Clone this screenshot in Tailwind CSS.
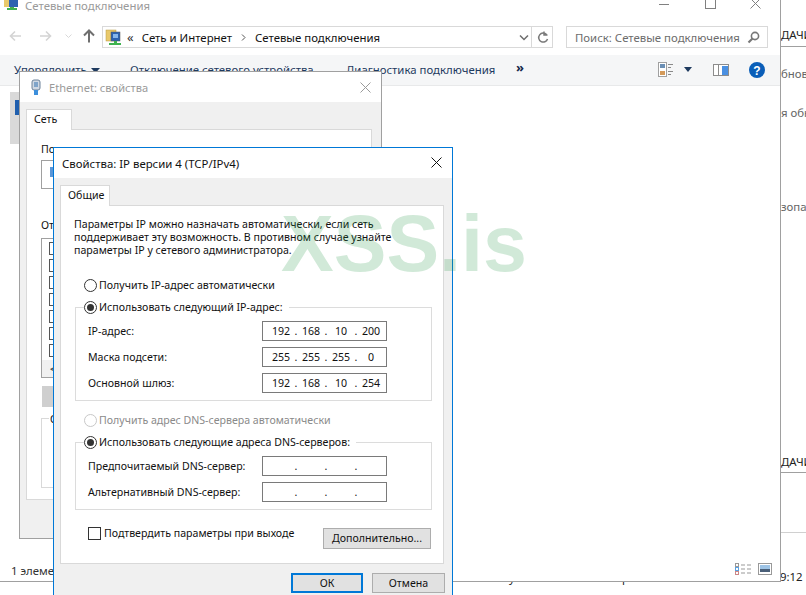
<!DOCTYPE html>
<html lang="ru">
<head>
  <meta charset="UTF-8">
  <title>Свойства: IP версии 4</title>
  <script src="https://cdn.jsdelivr.net/npm/@tailwindcss/browser@4"></script>
</head>
<body class="relative w-[806px] h-[595px] overflow-hidden bg-white font-['Noto_Sans',sans-serif] text-[11.4px] leading-[13px] text-[#1a1a1a]">

  <!-- desktop behind: other window edges -->
  <div class="absolute left-[781px] top-[28px] w-[25px] border-b border-[#a0a0a0] h-[19px] text-[#222] whitespace-nowrap overflow-hidden">ДАЧИ</div>
  <div class="absolute left-[781px] top-[67px] text-[#666] whitespace-nowrap">бнов.</div>
  <div class="absolute left-[781px] top-[106px] text-[#666] whitespace-nowrap">я обн</div>
  <div class="absolute left-[781px] top-[200px] text-[#666] whitespace-nowrap">зопас</div>
  <div class="absolute left-[781px] top-[455px] w-[25px] h-[18px] border-b border-[#a0a0a0] text-[#222] whitespace-nowrap overflow-hidden">ДАЧИ</div>
  <div class="absolute left-[781px] top-[532px] w-[25px] border-t border-[#d0d0d0]"></div>
  <div class="absolute left-[780px] top-[570px] text-[#222]">9:12</div>
  <span class="absolute left-[509px] top-[571px] text-[#222]">у</span>
  <span class="absolute left-[622px] top-[571px] text-[#222]">р</span>

  <!-- explorer window -->
  <div class="absolute left-0 top-0 w-[781px] h-[582px] bg-white border-r border-b border-[#a0a0a0] flex flex-col">
    <div class="h-[26px] flex items-start relative">
      <svg class="absolute left-[4px] top-[-4px]" width="16" height="16" viewBox="0 0 16 16"><rect x="0" y="1" width="9" height="10" fill="#e9c96b"/><rect x="5" y="2" width="9" height="9" fill="#2d63b0"/><rect x="6" y="11" width="4" height="1" fill="#4caf50"/><rect x="3" y="12" width="10" height="2" fill="#3fb34f"/></svg>
      <span class="ml-[25px] text-[#9a9a9a] -mt-px">Сетевые подключения</span>
      <div class="ml-auto relative w-[130px] h-[12px]">
        <div class="absolute left-[9px] top-[4px] w-[10px] h-px bg-[#808080]"></div>
        <div class="absolute left-[55px] top-[-3px] w-[11px] h-[12px] border border-[#808080]"></div>
        <svg class="absolute left-[100px] top-[-2px]" width="11" height="11" viewBox="0 0 11 11"><path d="M.5.5l10 10M10.5.5l-10 10" stroke="#808080" fill="none"/></svg>
      </div>
    </div>

    <div class="h-[21px] flex items-center relative">
      <svg class="absolute left-[9px] top-[4px]" width="13" height="12" viewBox="0 0 13 12"><path d="M12 6H1.5M6 1.5L1.5 6 6 10.5" stroke="#d4d4d4" stroke-width="1.6" fill="none"/></svg>
      <svg class="absolute left-[39px] top-[4px]" width="13" height="12" viewBox="0 0 13 12"><path d="M1 6h10.5M7 1.5L11.5 6 7 10.5" stroke="#d4d4d4" stroke-width="1.6" fill="none"/></svg>
      <svg class="absolute left-[65px] top-[8px]" width="7" height="5" viewBox="0 0 7 5"><path d="M.5.5l3 3 3-3" stroke="#d8d8d8" fill="none"/></svg>
      <svg class="absolute left-[83px] top-[3px]" width="12" height="14" viewBox="0 0 12 14"><path d="M6 13.5V2M1 6.5L6 1.5l5 5" stroke="#6f6f6f" stroke-width="2" fill="none"/></svg>

      <div class="absolute left-[102px] top-0 w-[451px] h-[22px] border border-[#d9d9d9] flex items-center">
        <svg class="ml-[2px] shrink-0" width="16" height="17" viewBox="0 0 16 17"><rect x="1" y="1" width="10" height="11" fill="#e9c96b" stroke="#b89a45" stroke-width=".5"/><rect x="6" y="3" width="9" height="9" fill="#2d63b0" stroke="#555" stroke-width=".5"/><rect x="8" y="5" width="5" height="4" fill="#86b6ea"/><rect x="9" y="12" width="3" height="2" fill="#3fb34f"/><rect x="4" y="14" width="12" height="2" fill="#3fb34f"/></svg>
        <span class="ml-[6px] text-[#333] text-[13px]">«</span>
        <span class="ml-[8px] text-[#111]">Сеть и Интернет</span>
        <svg class="ml-[9px] shrink-0" width="5" height="7" viewBox="0 0 5 7"><path d="M1 .5l3 3-3 3" stroke="#555" fill="none"/></svg>
        <span class="ml-[9px] text-[#111]">Сетевые подключения</span>
        <svg class="absolute left-[416px] top-[8px]" width="10" height="6" viewBox="0 0 10 6"><path d="M1 .5l4 4 4-4" stroke="#6f6f6f" stroke-width="1.5" fill="none"/></svg>
        <div class="absolute left-[428px] top-0 bottom-0 border-l border-[#d9d9d9] w-[22px] flex items-center justify-center">
          <svg width="12" height="13" viewBox="0 0 12 13"><path d="M9.5 3.5A4.5 4.5 0 1 0 10.5 8M7 .5v3.5h3.5" stroke="#7a7a7a" stroke-width="1.5" fill="none"/></svg>
        </div>
      </div>

      <div class="absolute left-[566px] top-0 w-[202px] h-[22px] border border-[#d9d9d9] flex items-center pl-[8px]">
        <span class="text-[#6d6d6d] whitespace-nowrap">Поиск: Сетевые подключения</span>
        <svg class="absolute right-[7px] top-[4px]" width="13" height="13" viewBox="0 0 13 13"><circle cx="8" cy="5" r="3.6" stroke="#777" stroke-width="1.6" fill="none"/><path d="M5.500 7.500L1.500 11.500" stroke="#777" stroke-width="2.2"/></svg>
      </div>
    </div>

    <div class="mt-[8px] h-[31px] bg-[#f5f6f7] border-b border-[#e8e9ea] relative flex items-center whitespace-nowrap text-[#1e3a5f]">
      <span class="absolute left-[14px] top-[8px]">Упорядочить</span>
      <svg class="absolute left-[91px] top-[13px]" width="9" height="5" viewBox="0 0 9 5"><path d="M0 0h9L4.500 5z" fill="#1e3a5f"/></svg>
      <span class="absolute left-[130px] top-[8px]">Отключение сетевого устройства</span>
      <span class="absolute left-[346px] top-[8px]">Диагностика подключения</span>
      <span class="absolute left-[516px] top-[6px] text-[13px] font-bold text-[#14284a]">»</span>
      <svg class="absolute left-[658px] top-[7px]" width="15" height="15" viewBox="0 0 15 15"><rect x=".5" y=".5" width="8" height="14" fill="#fff" stroke="#a0a0a0"/><rect x="2" y="2" width="5" height="4" fill="#6b8fb5"/><rect x="2" y="9" width="5" height="4" fill="#d49a5a"/><path d="M10 2.500h5M10 5.500h3M10 9.500h5M10 12.500h3" stroke="#8a8a8a"/></svg>
      <svg class="absolute left-[684px] top-[12px]" width="8" height="5" viewBox="0 0 8 5"><path d="M0 0h8L4 5z" fill="#1e3a5f"/></svg>
      <svg class="absolute left-[713px] top-[9px]" width="16" height="12" viewBox="0 0 16 12"><rect x=".5" y=".5" width="15" height="11" fill="#fff" stroke="#8c8c8c"/><path d="M5.500 1v10" stroke="#8c8c8c"/><rect x="9" y="2" width="6" height="9" fill="#4a90e2"/></svg>
      <svg class="absolute left-[749px] top-[7px]" width="16" height="16" viewBox="0 0 16 16"><circle cx="8" cy="8" r="8" fill="#0a5eb8"/><text x="8" y="12.500" text-anchor="middle" font-family="Liberation Sans" font-weight="700" font-size="12" fill="#fff">?</text></svg>
    </div>

    <div class="relative flex-1">
      <div class="absolute left-[10px] top-[6px] w-[10px] h-[52px] bg-[#d9d9d9]"></div>
      <div class="absolute left-[15px] top-[14px] w-[5px] h-[15px] bg-[#1f5fae]"></div>
      <span class="absolute left-[11px] top-[478px] text-[#333]">1 элемент</span>
      <svg class="absolute left-[735px] top-[477px]" width="16" height="13" viewBox="0 0 16 13"><rect x=".5" y=".5" width="3" height="3" fill="#fff" stroke="#999"/><rect x=".5" y="4.500" width="3" height="3" fill="#fff" stroke="#5aa0e0"/><rect x=".5" y="8.500" width="3" height="3" fill="#fff" stroke="#c88"/><path d="M6 2h4M12 2h4M6 6h4M12 6h4M6 10h4M12 10h4" stroke="#999"/></svg>
      <svg class="absolute left-[758px] top-[477px]" width="14" height="12" viewBox="0 0 14 12"><rect x=".5" y=".5" width="13" height="11" fill="#fff" stroke="#999"/><rect x="2" y="2" width="10" height="4" fill="#9ec4e6"/><rect x="2" y="6" width="10" height="3" fill="#4a5f78"/></svg>
    </div>
  </div>

  <!-- Ethernet properties window -->
  <div class="absolute left-[19px] top-[71px] w-[363px] h-[468px] border border-[#a0a0a0] bg-[#f0f0f0] flex flex-col">
    <div class="h-[30px] bg-white flex items-center relative shrink-0">
      <svg class="ml-[11px]" width="10" height="17" viewBox="0 0 10 17"><rect x="1" y="1" width="8" height="10" rx="2" fill="#cfd8e3" stroke="#6d8299"/><rect x="3" y="3" width="4" height="5" fill="#7fa4c9"/><rect x="3" y="11" width="4" height="5" fill="#3d8fdc"/></svg>
      <span class="ml-[8px] text-[#9a9a9a] text-[11.1px]">Ethernet: свойства</span>
      <svg class="absolute right-[10px] top-[10px]" width="11" height="11" viewBox="0 0 11 11"><path d="M.5.5l10 10M10.500.5l-10 10" stroke="#9a9a9a" fill="none"/></svg>
    </div>
    <div class="px-[6px] pt-[7px] text-[10.6px]">
      <div class="w-[46px] h-[21px] -mb-px relative z-10 bg-white border border-b-0 border-[#d9d9d9] pl-[7px] pt-[3px] text-[#111]">Сеть</div>
      <div class="w-[346px] h-[371px] bg-white border border-[#d9d9d9] relative text-[#111] overflow-hidden">
        <span class="absolute left-[14px] top-[13px]">Подключение через:</span>
        <div class="absolute left-[14px] top-[30px] w-[300px] h-[29px] border border-[#a0a0a0]">
          <div class="ml-[8px] mt-[6px] w-[8px] h-[10px] bg-[#5b97d8]"></div>
        </div>
        <span class="absolute left-[14px] top-[89px]">Отмеченные компоненты</span>
        <div class="absolute left-[14px] top-[108px] w-[300px] h-[140px] border border-[#a0a0a0] flex flex-col pl-[7px] pt-[3px] gap-[4px]">
          <div class="w-[13px] h-[13px] border border-[#555] text-[10px] leading-[11px] text-center">✓</div>
          <div class="w-[13px] h-[13px] border border-[#555] text-[10px] leading-[11px] text-center">✓</div>
          <div class="w-[13px] h-[13px] border border-[#555] text-[10px] leading-[11px] text-center">✓</div>
          <div class="w-[13px] h-[13px] border border-[#555] text-[10px] leading-[11px] text-center">✓</div>
          <div class="w-[13px] h-[13px] border border-[#555]"></div>
          <div class="w-[13px] h-[13px] border border-[#555] text-[10px] leading-[11px] text-center">✓</div>
          <div class="w-[13px] h-[13px] border border-[#555]"></div>
          <div class="absolute left-0 right-0 bottom-0 h-[17px] bg-[#f0f0f0] text-[#555] pl-[8px] pt-[2px] text-[11px] font-bold">&lt;</div>
        </div>
        <div class="absolute left-[15px] top-[256px] w-[60px] h-[21px] bg-[#cfcfcf]"></div>
        <div class="absolute left-[14px] top-[288px] w-[300px] h-[70px] border border-[#d9d9d9]"></div>
        <span class="absolute left-[22px] top-[283px] bg-white px-px">Описание</span>
      </div>
    </div>
  </div>

  <!-- IPv4 properties dialog -->
  <div class="absolute left-[53px] top-[147px] w-[400px] h-[460px] border border-[#0078d7] bg-[#f0f0f0]">
    <div class="h-[30px] bg-white relative flex items-center pl-[8px] text-[#111]">
      <span>Свойства: IP версии 4 (TCP/IPv4)</span>
      <svg class="absolute right-[10px] top-[9px]" width="11" height="11" viewBox="0 0 11 11"><path d="M.5.5l10 10M10.500.5l-10 10" stroke="#111" fill="none"/></svg>
    </div>

    <div class="pl-[6px] pt-[7px] text-[10.6px]">
      <div class="w-[50px] h-[21px] -mb-px relative z-10 bg-white border border-b-0 border-[#d9d9d9] pl-[7px] pt-[3px] text-[#111]">Общие</div>
      <div class="w-[384px] h-[359px] bg-white border border-[#d9d9d9] px-[13px] pt-[12px] text-[#111]">
        <p class="whitespace-nowrap">Параметры IP можно назначать автоматически, если сеть<br>поддерживает эту возможность. В противном случае узнайте<br>параметры IP у сетевого администратора.</p>

        <div class="flex items-center gap-[2px] ml-[10px] mt-[22px]">
          <div class="w-[13px] h-[13px] rounded-full border border-[#333] bg-white"></div>
          <span>Получить IP-адрес автоматически</span>
        </div>

        <div class="relative mt-[15px] w-[357px] h-[94px] border border-[#dcdcdc] ml-px flex flex-col gap-[6px] pt-[13px]">
          <div class="absolute left-[8px] top-[-7px] flex items-center gap-[2px] bg-white pr-[6px]">
            <div class="w-[13px] h-[13px] rounded-full border border-[#333] flex items-center justify-center"><div class="w-[7px] h-[7px] rounded-full bg-[#333]"></div></div>
            <span>Использовать следующий IP-адрес:</span>
          </div>
          <div class="flex items-center pl-[12px] pr-[44px] justify-between">
            <span>IP-адрес:</span>
            <div class="w-[125px] h-[20px] border border-[#7a7a7a] grid grid-cols-[26px_4px_26px_4px_26px_4px_26px] items-center text-center pl-[5px]"><span>192</span><span>.</span><span>168</span><span>.</span><span>10</span><span>.</span><span>200</span></div>
          </div>
          <div class="flex items-center pl-[12px] pr-[44px] justify-between">
            <span>Маска подсети:</span>
            <div class="w-[125px] h-[20px] border border-[#7a7a7a] grid grid-cols-[26px_4px_26px_4px_26px_4px_26px] items-center text-center pl-[5px]"><span>255</span><span>.</span><span>255</span><span>.</span><span>255</span><span>.</span><span>0</span></div>
          </div>
          <div class="flex items-center pl-[12px] pr-[44px] justify-between">
            <span>Основной шлюз:</span>
            <div class="w-[125px] h-[20px] border border-[#7a7a7a] grid grid-cols-[26px_4px_26px_4px_26px_4px_26px] items-center text-center pl-[5px]"><span>192</span><span>.</span><span>168</span><span>.</span><span>10</span><span>.</span><span>254</span></div>
          </div>
        </div>

        <div class="flex items-center gap-[2px] ml-[10px] mt-[13px] text-[#8a8a8a]">
          <div class="w-[13px] h-[13px] rounded-full border border-[#c8c8c8] bg-white"></div>
          <span>Получить адрес DNS-сервера автоматически</span>
        </div>

        <div class="relative mt-[15px] w-[357px] h-[68px] border border-[#dcdcdc] ml-px flex flex-col gap-[6px] pt-[13px]">
          <div class="absolute left-[8px] top-[-7px] flex items-center gap-[2px] bg-white pr-[6px]">
            <div class="w-[13px] h-[13px] rounded-full border border-[#333] flex items-center justify-center"><div class="w-[7px] h-[7px] rounded-full bg-[#333]"></div></div>
            <span>Использовать следующие адреса DNS-серверов:</span>
          </div>
          <div class="flex items-center pl-[12px] pr-[44px] justify-between">
            <span class="whitespace-nowrap">Предпочитаемый DNS-сервер:</span>
            <div class="w-[125px] h-[20px] border border-[#7a7a7a] grid grid-cols-[26px_4px_26px_4px_26px_4px_26px] items-center text-center pl-[5px]"><span></span><span>.</span><span></span><span>.</span><span></span><span>.</span><span></span></div>
          </div>
          <div class="flex items-center pl-[12px] pr-[44px] justify-between">
            <span class="whitespace-nowrap">Альтернативный DNS-сервер:</span>
            <div class="w-[125px] h-[20px] border border-[#7a7a7a] grid grid-cols-[26px_4px_26px_4px_26px_4px_26px] items-center text-center pl-[5px]"><span></span><span>.</span><span></span><span>.</span><span></span><span>.</span><span></span></div>
          </div>
        </div>

        <div class="flex items-start justify-between mt-[17px] ml-[14px] mr-[-1px]">
          <div class="flex items-center gap-[3px]">
            <div class="w-[13px] h-[13px] border border-[#333] bg-white"></div>
            <span>Подтвердить параметры при выходе</span>
          </div>
          <div class="w-[108px] h-[21px] mt-px border border-[#adadad] bg-[#e1e1e1] flex items-center justify-center">Дополнительно...</div>
        </div>
      </div>

      <div class="flex gap-[9px] ml-[231px] mt-[9px] text-[#111]">
        <div class="w-[72px] h-[20px] border-2 border-[#0078d7] bg-[#e1e1e1] flex items-center justify-center">ОК</div>
        <div class="w-[73px] h-[20px] border border-[#adadad] bg-[#e1e1e1] flex items-center justify-center">Отмена</div>
      </div>
    </div>
  </div>

  <!-- watermark -->
  <div class="absolute left-[281px] top-[198px] font-['Liberation_Sans',sans-serif] font-bold text-[79px] leading-[92px] text-[#1a8f3a]/20 pointer-events-none whitespace-nowrap">XSS.is</div>
</body>
</html>
